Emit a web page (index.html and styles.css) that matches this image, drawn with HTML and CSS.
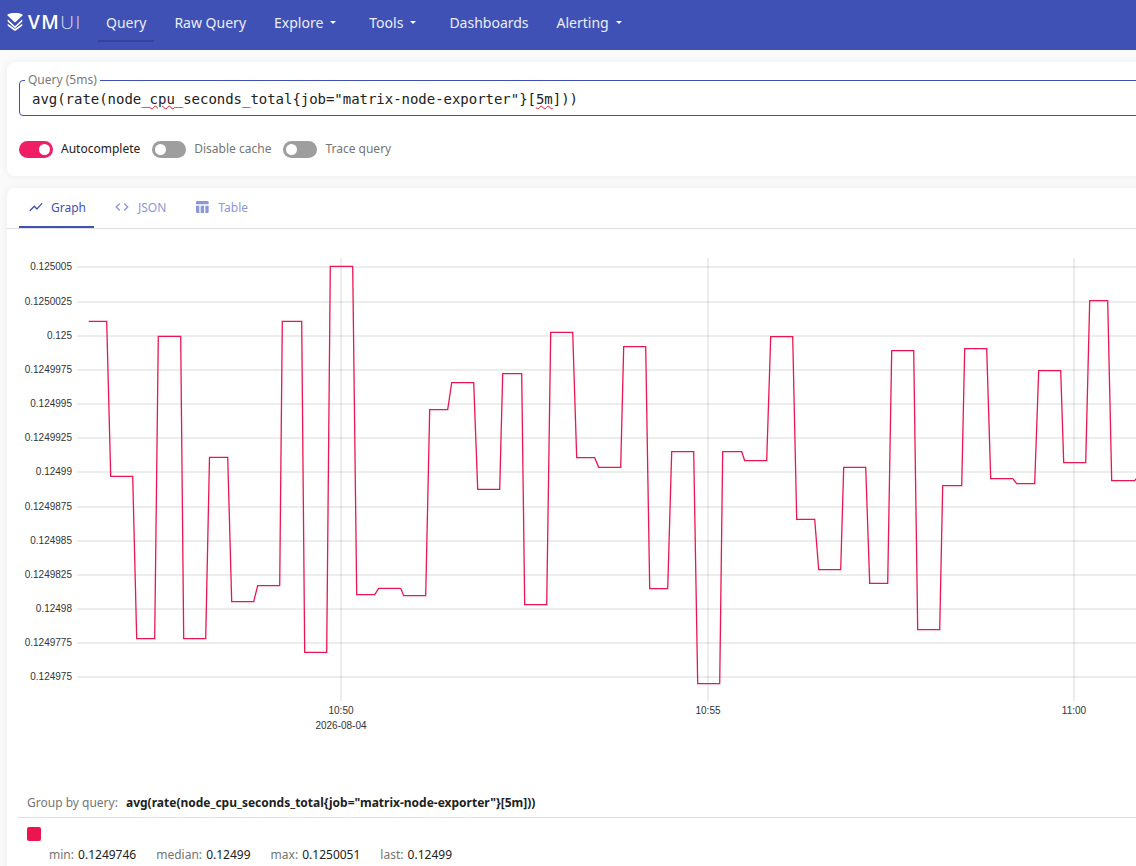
FILE: index.html
```html
<!DOCTYPE html>
<html lang="en">
<head>
    <meta charset="UTF-8">
    <meta name="viewport" content="width=device-width, initial-scale=1.0">
    <title>VMUI</title>
    <link rel="stylesheet" href="styles.css">
</head>
<body>
    <header class="topbar">
        <div class="logo">
            <svg class="logo-mark" viewBox="0 0 16 18" width="16" height="18">
                <path d="M0.6 1.6C2.5 0.4 5.2 0 8 0s5.500 0.400 7.400 1.600c0.300 0.200 0.300 0.500 0.100 0.800L8.700 8.900c-0.400 0.400-1 0.400-1.400 0L0.500 2.400C0.300 2.100 0.300 1.800 0.600 1.600z" fill="#fff"/>
                <path d="M0.700 6.300L7.500 12.700c0.300 0.300 0.700 0.300 1 0L15.300 6.300V8.400L8.500 14.800c-0.300 0.300-0.700 0.300-1 0L0.700 8.400z" fill="#fff"/>
                <path d="M0.700 10.800L7.500 15.500c0.300 0.200 0.700 0.200 1 0L15.300 10.800V12.700L8.500 17.700c-0.300 0.200-0.700 0.200-1 0L0.700 12.700z" fill="#fff"/>
            </svg>
            <span class="logo-vm">VM</span><span class="logo-ui">UI</span>
        </div>
        <nav class="nav">
            <a class="nav-item active">Query</a>
            <a class="nav-item">Raw Query</a>
            <a class="nav-item">Explore<i class="caret"></i></a>
            <a class="nav-item">Tools<i class="caret"></i></a>
            <a class="nav-item">Dashboards</a>
            <a class="nav-item">Alerting<i class="caret"></i></a>
        </nav>
    </header>

    <main class="page">
        <section class="card query-card">
            <div class="query-field">
                <span class="query-label">Query (5ms)</span>
                <div class="query-text">avg(rate(node_<span class="typo">cpu</span>_seconds_total{job="matrix-node-exporter"}[<span class="typo">5m</span>]))</div>
            </div>
            <div class="switches">
                <label class="switch on"><span class="track"><span class="thumb"></span></span>Autocomplete</label>
                <label class="switch"><span class="track"><span class="thumb"></span></span>Disable cache</label>
                <label class="switch"><span class="track"><span class="thumb"></span></span>Trace query</label>
            </div>
        </section>

        <section class="card result-card">
            <div class="tabs">
                <a class="tab active">
                    <svg viewBox="0 0 24 24" width="16" height="16"><path d="M3.500 18.490l6-6.010 4 4L22 6.920l-1.410-1.410-7.090 7.970-4-4L2 16.990z"/></svg>
                    Graph
                </a>
                <a class="tab">
                    <svg viewBox="0 0 24 24" width="16" height="16"><path d="M9.400 16.600L4.800 12l4.600-4.600L8 6l-6 6 6 6 1.400-1.400zm5.200 0l4.600-4.600-4.600-4.600L16 6l6 6-6 6-1.400-1.400z"/></svg>
                    JSON
                </a>
                <a class="tab">
                    <svg viewBox="0 0 24 24" width="16" height="16"><path d="M10 10.020h5V21h-5zM17 21h3c1.100 0 2-.9 2-2v-9h-5v11zm3-18H5c-1.100 0-2 .9-2 2v3h19V5c0-1.100-.9-2-2-2zM3 19c0 1.100.9 2 2 2h3V10H3v9z"/></svg>
                    Table
                </a>
            </div>

            <!-- viewBox uses page coordinates so the points read straight off the screenshot -->
            <svg class="chart" viewBox="7 229 1273 551" width="1273" height="551">
                <g class="grid">
                    <line x1="77" x2="1280" y1="267" y2="267"/>
                    <line x1="77" x2="1280" y1="302" y2="302"/>
                    <line x1="77" x2="1280" y1="336" y2="336"/>
                    <line x1="77" x2="1280" y1="370" y2="370"/>
                    <line x1="77" x2="1280" y1="404" y2="404"/>
                    <line x1="77" x2="1280" y1="438" y2="438"/>
                    <line x1="77" x2="1280" y1="472" y2="472"/>
                    <line x1="77" x2="1280" y1="507" y2="507"/>
                    <line x1="77" x2="1280" y1="541" y2="541"/>
                    <line x1="77" x2="1280" y1="575" y2="575"/>
                    <line x1="77" x2="1280" y1="609" y2="609"/>
                    <line x1="77" x2="1280" y1="643" y2="643"/>
                    <line x1="77" x2="1280" y1="677" y2="677"/>
                    <line x1="341" x2="341" y1="258" y2="701"/>
                    <line x1="708" x2="708" y1="258" y2="701"/>
                    <line x1="1074" x2="1074" y1="258" y2="701"/>
                </g>
                <g class="y-labels">
                    <text x="72" y="270">0.125005</text>
                    <text x="72" y="305">0.1250025</text>
                    <text x="72" y="339">0.125</text>
                    <text x="72" y="373">0.1249975</text>
                    <text x="72" y="407">0.124995</text>
                    <text x="72" y="441">0.1249925</text>
                    <text x="72" y="475">0.12499</text>
                    <text x="72" y="510">0.1249875</text>
                    <text x="72" y="544">0.124985</text>
                    <text x="72" y="578">0.1249825</text>
                    <text x="72" y="612">0.12498</text>
                    <text x="72" y="646">0.1249775</text>
                    <text x="72" y="680">0.124975</text>
                </g>
                <g class="x-labels">
                    <text x="341" y="714">10:50</text>
                    <text x="341" y="729">2026-08-04</text>
                    <text x="708" y="714">10:55</text>
                    <text x="1074" y="714">11:00</text>
                </g>
                <polyline class="series" points="88.700,321.300 106.700,321.300 110.700,476.300 132.700,476.300 136.700,638.700 154.700,638.700 158.300,336.300 180.700,336.300 183.700,638.700 205.700,638.700 209.500,457.300 227.700,457.300 231.700,601.700 253.700,601.700 257.700,585.700 279.700,585.700 282.300,321.300 301.700,321.300 304.700,652.300 326.700,652.300 330.300,266.300 352.700,266.300 356.700,594.700 374.700,594.700 378.700,588.300 400.700,588.300 403.700,595.700 425.700,595.700 429.700,409.700 447.700,409.700 451.700,382.700 473.700,382.700 477.700,489.300 499.700,489.300 502.700,373.700 521.700,373.700 524.700,604.700 546.700,604.700 550.700,332.300 572.700,332.300 576.700,457.700 594.700,457.700 598.700,467.300 620.700,467.300 623.700,346.700 645.700,346.700 649.700,588.700 667.700,588.700 671.700,451.700 693.700,451.700 697.700,683.700 719.700,683.700 722.700,451.700 741.700,451.700 744.700,460.700 766.700,460.700 770.700,336.700 792.700,336.700 796.700,519.300 814.700,519.300 818.700,569.700 840.700,569.700 843.700,467.300 865.700,467.300 869.700,583.300 887.700,583.300 891.700,350.700 913.700,350.700 917.700,629.700 939.700,629.700 942.700,485.700 961.700,485.700 964.700,348.700 986.700,348.700 990.700,478.700 1012.700,478.700 1016.700,483.700 1034.700,483.700 1038.700,370.700 1060.700,370.700 1063.700,462.700 1085.700,462.700 1089.700,300.700 1107.700,300.700 1111.700,480.700 1134.700,480.700 1137,477.700"/>
            </svg>

            <div class="legend">
                <div class="legend-group">
                    <span class="legend-caption">Group by query:</span>
                    <b>avg(rate(node_cpu_seconds_total{job="matrix-node-exporter"}[5m]))</b>
                </div>
                <div class="legend-item">
                    <span class="legend-swatch"></span>
                    <div class="legend-stats">
                        <span>min: <em>0.1249746</em></span>
                        <span>median: <em>0.12499</em></span>
                        <span>max: <em>0.1250051</em></span>
                        <span>last: <em>0.12499</em></span>
                    </div>
                </div>
            </div>
        </section>
    </main>
</body>
</html>
```

FILE: styles.css
```css
html, body {
    height: 866px;
    overflow: hidden;
}
body {
    margin: 0;
    background-color: #fafafa;
    color: #212121;
    font-family: "Noto Sans", "Open Sans", sans-serif;
    font-size: 14px;
}

/* top bar */
.topbar {
    display: flex;
    height: 50px;
    padding-left: 7px;
    background-color: #3f51b5;
    color: #fff;
}
.logo {
    display: flex;
    align-items: center;
    width: 91px;
    height: 44px;
    font-family: "Open Sans", sans-serif;
    font-size: 19px;
    line-height: 1;
    letter-spacing: 1.5px;
}
.logo-mark {
    margin-right: 5px;
}
.logo-vm {
    font-weight: 600;
}
.logo-ui {
    font-weight: 300;
    opacity: 0.8;
}
.nav {
    display: flex;
    gap: 12px;
    height: 42px;
}
.nav-item {
    display: flex;
    align-items: center;
    padding: 4px 8px 0;
    border-bottom: 2px solid transparent;
    color: #eceef7;
}
.nav-item.active {
    border-bottom-color: #35449b;
}
.caret {
    width: 0;
    height: 0;
    margin: 0 5px 0 7px;
    border-left: 3px solid transparent;
    border-right: 3px solid transparent;
    border-top: 3px solid #fff;
}
.nav-item:last-child .caret {
    margin-right: 4px;
}

/* cards */
.page {
    display: flex;
    flex-direction: column;
    gap: 12px;
    width: 1273px;
    padding: 12px 0 0 7px;
}
.card {
    background-color: #fff;
    border-radius: 8px;
    box-shadow: 0 0 8px rgba(0, 0, 0, 0.06);
}
.query-card {
    height: 114px;
    box-sizing: border-box;
    padding: 18px 12px 0;
}
.query-field {
    position: relative;
    height: 36px;
    box-sizing: border-box;
    border: 1px solid #3f51b5;
    border-radius: 4px;
    padding: 0 12px;
}
.query-label {
    position: absolute;
    top: -8px;
    left: 5px;
    padding: 0 3px;
    background-color: #fff;
    color: #7a7a7a;
    font-size: 12px;
    line-height: 14px;
}
.query-text {
    padding-top: 8px;
    font-family: "DejaVu Sans Mono", monospace;
    font-size: 14px;
    line-height: 20px;
    letter-spacing: -0.03px;
    white-space: pre;
}
.typo {
    text-decoration: underline wavy #e31b23 1.200px;
}
.switches {
    display: flex;
    gap: 12px;
    margin-top: 25px;
}
.switch {
    display: flex;
    align-items: flex-start;
    gap: 8px;
    color: #757575;
    font-size: 12px;
    line-height: 15px;
}
.switch.on {
    color: #212121;
}
.track {
    display: flex;
    align-items: center;
    width: 34px;
    height: 17px;
    box-sizing: border-box;
    padding: 0 3px;
    border-radius: 9px;
    background-color: #9e9e9e;
}
.thumb {
    width: 11px;
    height: 11px;
    border-radius: 50%;
    background-color: #fff;
}
.switch.on .track {
    justify-content: flex-end;
    background-color: #f01e64;
}

/* result tabs */
.result-card {
    height: 700px;
}
.tabs {
    display: flex;
    height: 41px;
    box-sizing: border-box;
    padding-left: 12px;
    border-bottom: 1px solid #e0e0e0;
    font-size: 12px;
}
.tab {
    display: flex;
    align-items: center;
    gap: 8px;
    height: 40px;
    box-sizing: border-box;
    padding: 0 9px;
    margin-right: 10px;
    border-bottom: 2px solid transparent;
    color: #8c97da;
}
.tab svg {
    fill: currentColor;
}
.tab.active {
    gap: 7px;
    padding-right: 8px;
    margin-right: 11px;
    border-bottom-color: #3f51b5;
    color: #3f51b5;
}

/* chart */
.chart {
    display: block;
}
.grid line {
    stroke: rgba(0, 0, 0, 0.07);
    stroke-width: 2;
}
.chart text {
    fill: #333;
    font-family: "Liberation Sans", Arial, sans-serif;
    font-size: 10px;
}
.y-labels text {
    text-anchor: end;
}
.x-labels text {
    text-anchor: middle;
}
.series {
    fill: none;
    stroke: #ec1550;
    stroke-width: 1.300;
}

/* legend */
.legend {
    padding: 0 0 0 11px;
    font-size: 12px;
}
.legend-group {
    height: 38px;
    box-sizing: border-box;
    padding: 14px 0 0 9px;
    border-bottom: 1px solid #e0e0e0;
    line-height: 17px;
}
.legend-caption {
    margin-right: 5px;
    color: #757575;
}
.legend-item {
    padding: 9px 0 0 9px;
}
.legend-swatch {
    display: block;
    width: 14px;
    height: 14px;
    border-radius: 2px;
    background-color: #ec1550;
}
.legend-stats {
    display: flex;
    gap: 20px;
    padding: 5px 0 0 22px;
    color: #757575;
    line-height: 17px;
}
.legend-stats em {
    margin-left: 1px;
    color: #212121;
    font-style: normal;
}
```
